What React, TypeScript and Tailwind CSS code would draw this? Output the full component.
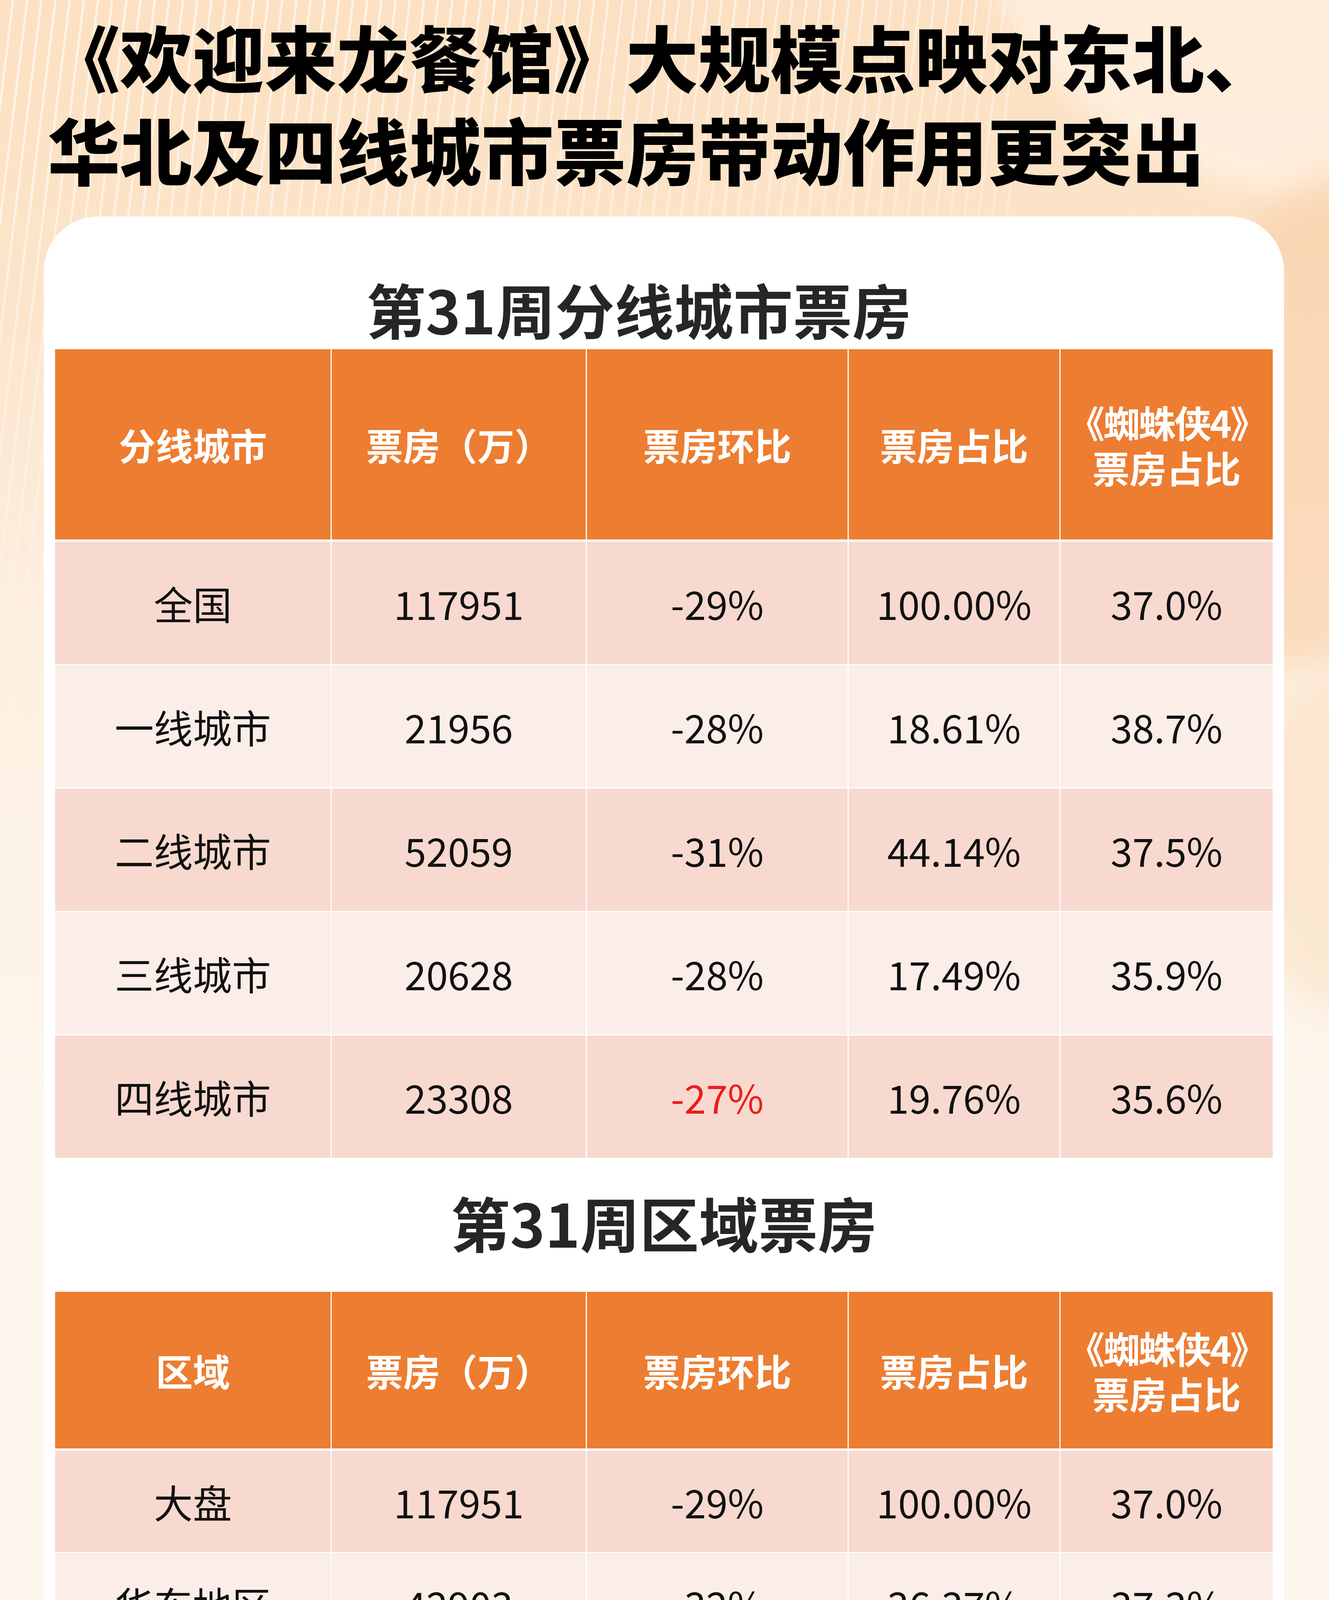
import React from "react";

type Row = { name: string; box: string; chg: string; share: string; spider: string; red?: boolean };

const cityRows: Row[] = [
  { name: "全国", box: "117951", chg: "-29%", share: "100.00%", spider: "37.0%" },
  { name: "一线城市", box: "21956", chg: "-28%", share: "18.61%", spider: "38.7%" },
  { name: "二线城市", box: "52059", chg: "-31%", share: "44.14%", spider: "37.5%" },
  { name: "三线城市", box: "20628", chg: "-28%", share: "17.49%", spider: "35.9%" },
  { name: "四线城市", box: "23308", chg: "-27%", share: "19.76%", spider: "35.6%", red: true },
];

const regionRows: Row[] = [
  { name: "大盘", box: "117951", chg: "-29%", share: "100.00%", spider: "37.0%" },
  { name: "华东地区", box: "42903", chg: "-32%", share: "36.37%", spider: "37.3%" },
  { name: "华南地区", box: "20546", chg: "-32%", share: "17.42%", spider: "42.0%" },
  { name: "华北地区", box: "15224", chg: "-22%", share: "12.91%", spider: "33.8%", red: true },
  { name: "华中地区", box: "13887", chg: "-26%", share: "11.77%", spider: "35.5%" },
  { name: "西南地区", box: "13030", chg: "-30%", share: "11.05%", spider: "37.2%" },
  { name: "西北地区", box: "6338", chg: "-26%", share: "5.37%", spider: "36.0%" },
  { name: "东北地区", box: "6023", chg: "-19%", share: "5.11%", spider: "31.2%", red: true },
];

function Table({ first, rows, headH, rowH }: { first: string; rows: Row[]; headH: string; rowH: string }) {
  const cols = "grid grid-cols-[705px_650px_667px_539px_543px] gap-x-[3px]";
  const head = `flex items-center justify-center bg-[#ED7D31] text-white font-bold text-[95px] leading-[116px] text-center ${headH}`;
  return (
    <div className="flex flex-col bg-white">
      <div className={`${cols} mb-[6px]`}>
        <div className={head}>{first}</div>
        <div className={head}>票房（万）</div>
        <div className={head}>票房环比</div>
        <div className={head}>票房占比</div>
        <div className={head}>
          <div className="flex flex-col items-center">
            <span className="whitespace-nowrap tracking-[-4px]">《蜘蛛侠4》</span>
            <span>票房占比</span>
          </div>
        </div>
      </div>
      <div className="flex flex-col gap-y-[3px]">
        {rows.map((r, i) => {
          const bg = i % 2 === 0 ? "bg-[#F8D9CF]" : "bg-[#FBEDE8]";
          const cell = `flex items-center justify-center text-[100px] leading-none ${bg} ${rowH}`;
          return (
            <div key={r.name} className={cols}>
              <div className={`${cell} text-[#111111]`}>{r.name}</div>
              <div className={`${cell} text-[#111111]`}>{r.box}</div>
              <div className={`${cell} ${r.red ? "text-[#EE1C1C]" : "text-[#111111]"}`}>{r.chg}</div>
              <div className={`${cell} text-[#111111]`}>{r.share}</div>
              <div className={`${cell} text-[#111111]`}>{r.spider}</div>
            </div>
          );
        })}
      </div>
    </div>
  );
}

function Logo() {
  return (
    <svg width="180" height="180" viewBox="0 0 100 100">
      <defs>
        <clipPath id="lg">
          <rect x="0" y="0" width="100" height="100" rx="24" />
        </clipPath>
      </defs>
      <rect x="0" y="0" width="100" height="100" rx="24" fill="#F76B22" />
      <g clipPath="url(#lg)">
        <polygon points="49,14 58,24 65,24 65,38 34,38 34,24 40,24" fill="#FFFFFF" />
        <circle cx="49.5" cy="30" r="3.6" fill="#F76B22" />
        <rect x="27" y="38" width="46" height="6" fill="#FFFFFF" />
        <polygon points="34,47 65,47 73,100 27,100" fill="#FFFFFF" />
        <polygon points="27,80 73,62 73,74 27,92" fill="#F9A27C" />
        {[0, 1, 2, 3, 4].map((k) => (
          <rect key={"u" + k} x={33 + k * 7.5} y={70 - k * 2.9} width="3.4" height="3.6" fill="#F76B22" transform={`rotate(-20 ${34.7 + k * 7.5} ${71.8 - k * 2.9})`} />
        ))}
        {[0, 1, 2, 3, 4].map((k) => (
          <rect key={"l" + k} x={33 + k * 7.5} y={94 - k * 2.9} width="3.4" height="3.6" fill="#F76B22" transform={`rotate(-20 ${34.7 + k * 7.5} ${95.8 - k * 2.9})`} />
        ))}
      </g>
    </svg>
  );
}

export default function App() {
  return (
    <div className="relative w-[3401px] h-[6429px] overflow-hidden bg-[#FDF6EC] font-['Noto_Sans_CJK_SC',sans-serif]">
      {/* background decoration */}
      <div className="absolute left-0 top-0 w-full h-[2800px] bg-[linear-gradient(180deg,#FCE0C1_0%,#FCE5CC_30%,#FDF0E2_60%,#FDF6EC_100%)]" />
      <div className="absolute left-0 top-0 w-[2600px] h-[2200px] bg-[repeating-linear-gradient(97deg,transparent_0px,transparent_30px,rgba(255,255,255,0.6)_30px,rgba(255,255,255,0.6)_36px)] [mask-image:linear-gradient(165deg,black_10%,transparent_70%)]" />
      <div className="absolute left-[2500px] top-[-420px] w-[1500px] h-[900px] rounded-[50%] bg-[#FFF3E6] opacity-70 blur-[30px] rotate-[20deg]" />
      <div className="absolute left-[2950px] top-[350px] w-[1000px] h-[1400px] rounded-[50%] bg-[#F9CFA6] opacity-60 blur-[40px] rotate-[30deg]" />
      <div className="absolute left-[3150px] top-[1700px] w-[700px] h-[900px] rounded-[50%] bg-[#FBDDBE] opacity-50 blur-[40px]" />

      <div className="relative flex flex-col">
        {/* title */}
        <div className="pt-[24px] pl-[122px] text-[185px] leading-[237px] font-black text-black whitespace-nowrap">
          <div>《欢迎来龙餐馆》大规模点映对东北、</div>
          <div>华北及四线城市票房带动作用更突出</div>
        </div>

        {/* card */}
        <div className="mt-[56px] ml-[112px] w-[3174px] rounded-[140px] bg-white px-[29px] pt-[156px] pb-[225px] flex flex-col">
          <div className="pr-[128px] text-center text-[152px] leading-[160px] font-bold text-[#262626]">第31周分线城市票房</div>
          <div className="mt-[24px]">
            <Table first="分线城市" rows={cityRows} headH="h-[487px]" rowH="h-[313px]" />
          </div>
          <div className="mt-[84px] text-center text-[152px] leading-[160px] font-bold text-[#262626]">第31周区域票房</div>
          <div className="mt-[99px]">
            <Table first="区域" rows={regionRows} headH="h-[401px]" rowH="h-[259px]" />
          </div>
        </div>

        {/* footer */}
        <div className="flex items-center pt-[31px]">
          <div className="w-[1297px] pl-[128px] flex flex-col text-[103px] leading-[180px] text-[#555555]">
            <span>统计截至时间</span>
            <span>2026年8月10日</span>
          </div>
          <div className="flex items-center gap-[52px]">
            <Logo />
            <span className="text-[118px] leading-none font-medium text-[#F76B22]">灯塔专业版</span>
          </div>
        </div>
      </div>
    </div>
  );
}
